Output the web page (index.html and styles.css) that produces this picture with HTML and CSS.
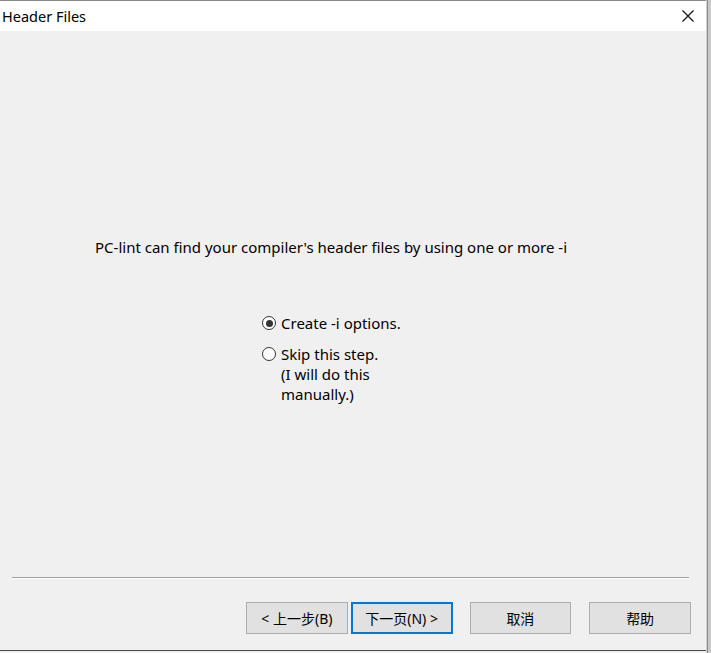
FILE: index.html
```html
<!DOCTYPE html>
<html>
<head>
<meta charset="utf-8">
<link rel="stylesheet" href="styles.css">
</head>
<body>
<div class="screen">
  <div class="window">
    <div class="titlebar">
      <span class="title">Header Files</span>
      <svg class="close" width="12" height="12" viewBox="0 0 12 12"><path d="M0.5 0.5L11.5 11.5M11.5 0.5L0.5 11.5" stroke="#111" stroke-width="1.2" fill="none"/></svg>
    </div>
    <div class="content">
      <div class="body">
        <p class="intro">PC-lint can find your compiler's header files by using one or more -i</p>
        <div class="options">
          <div class="opt">
            <span class="radio checked"></span>
            <span class="label">Create -i options.</span>
          </div>
          <div class="opt">
            <span class="radio"></span>
            <span class="label">Skip this step.<br>(I will do this<br>manually.)</span>
          </div>
        </div>
      </div>
      <div class="sep"></div>
      <div class="buttons">
        <button class="btn">&lt; 上一步(B)</button>
        <button class="btn default">下一页(N) &gt;</button>
        <button class="btn cancel">取消</button>
        <button class="btn">帮助</button>
      </div>
    </div>
  </div>
  <div class="edge"></div>
</div>
</body>
</html>
```
FILE: styles.css
```css
html, body {
  margin: 0;
  padding: 0;
  background: #f0f0f0;
}
body {
  font-family: "Noto Sans", "Noto Sans CJK SC", sans-serif;
  font-size: 15px;
  color: #000;
}
.screen {
  display: flex;
  width: 711px;
  height: 653px;
  overflow: hidden;
}
.window {
  width: 706px;
  height: 651px;
  border-top: 1px solid #8a8a8a;
  border-bottom: 1px solid #4a4a4a;
  box-sizing: border-box;
  display: flex;
  flex-direction: column;
  background: #f0f0f0;
}
.edge {
  width: 5px;
  height: 653px;
  background: linear-gradient(to right, #d0d0d0 0, #d0d0d0 1px, #8c8c8c 1px, #8c8c8c 2px, #c8c8c8 2px, #c8c8c8 100%);
}
.titlebar {
  height: 30px;
  background: #fff;
  display: flex;
  align-items: center;
  justify-content: space-between;
  padding: 0 12px 0 2px;
}
.title {
  font-size: 14.5px;
  line-height: 20px;
}
.close {
  display: block;
}
.content {
  flex: 1;
  display: flex;
  flex-direction: column;
}
.body {
  flex: 1;
  padding-top: 206px;
}
.intro {
  margin: 0 0 0 95px;
  line-height: 20px;
}
.options {
  margin: 56px 0 0 262px;
  display: flex;
  flex-direction: column;
  gap: 11px;
}
.opt {
  display: flex;
  align-items: flex-start;
  gap: 5px;
}
.label {
  line-height: 20px;
}
.radio {
  width: 14px;
  height: 14px;
  border: 1px solid #333;
  border-radius: 50%;
  background: #fff;
  box-sizing: border-box;
  margin-top: 3px;
  position: relative;
  flex: none;
}
.radio.checked::after {
  content: "";
  position: absolute;
  left: 2.5px;
  top: 2.5px;
  width: 7px;
  height: 7px;
  border-radius: 50%;
  background: #333;
}
.sep {
  margin: 0 17px 0 12px;
  height: 1px;
  background: #a0a0a0;
  border-bottom: 1px solid #fff;
}
.buttons {
  display: flex;
  padding: 23px 15px 16px 246px;
  gap: 3px;
}
.btn {
  width: 102px;
  height: 32px;
  background: #e1e1e1;
  border: 1px solid #adadad;
  font-family: "Noto Sans", "Noto Sans CJK SC", sans-serif;
  font-size: 14px;
  color: #000;
  padding: 0;
}
.btn.default {
  border: 2px solid #0078d7;
}
.btn.cancel {
  margin-left: 14px;
}
.btn.cancel + .btn {
  margin-left: 15px;
}
```
